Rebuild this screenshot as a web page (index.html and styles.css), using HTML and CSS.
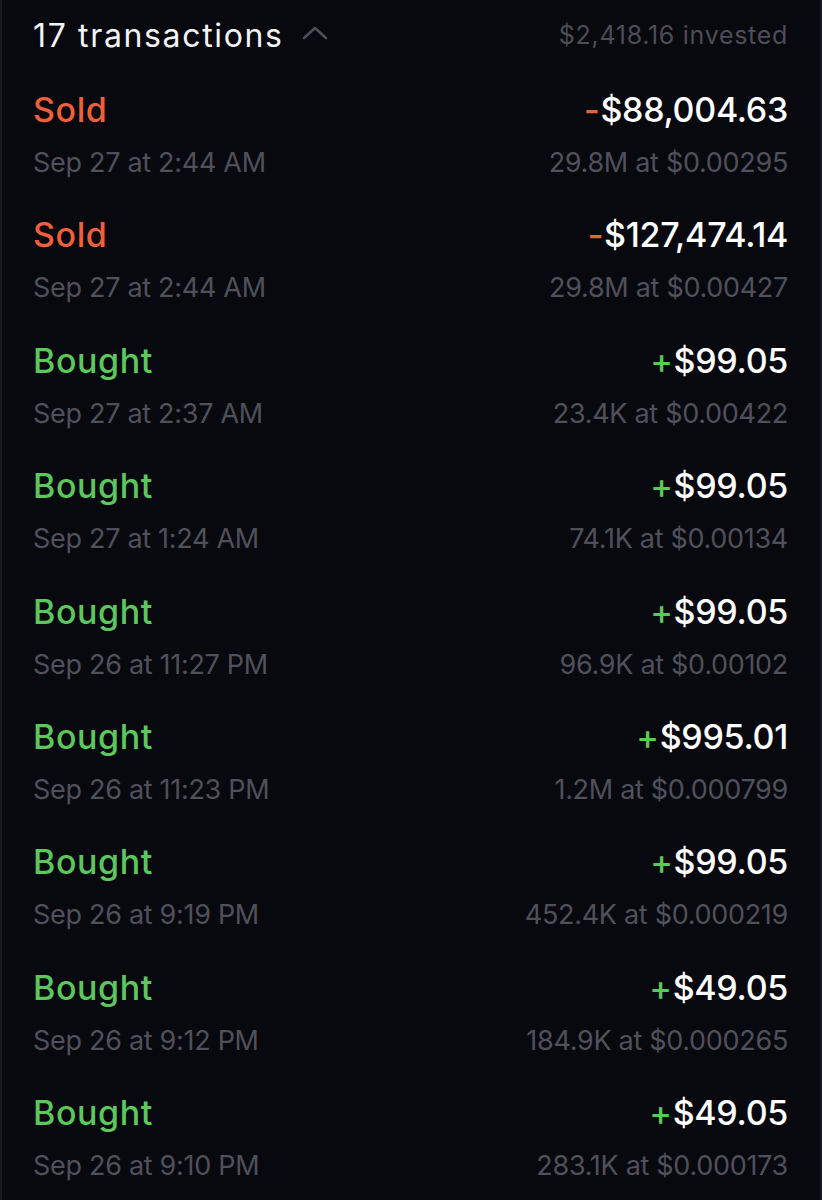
FILE: index.html
```html
<!DOCTYPE html>
<html lang="en">
<head>
    <meta charset="UTF-8">
    <meta name="viewport" content="width=device-width, initial-scale=1.0">
    <title>Transactions</title>
    <link rel="stylesheet" href="styles.css">
</head>
<body>
    <div class="panel">
        <div class="header">
            <div class="title">
                17 transactions
                <svg class="chevron" width="26" height="14" viewBox="0 0 26 14">
                    <path d="M2 12 L13 2 L24 12" fill="none" stroke="#4f4f59" stroke-width="2.6" stroke-linecap="round" stroke-linejoin="round"/>
                </svg>
            </div>
            <div class="invested">$2,418.16 invested</div>
        </div>

        <div class="tx">
            <div class="line">
                <span class="kind sold">Sold</span>
                <span class="amount"><span class="sign sold">-</span>$88,004.63</span>
            </div>
            <div class="line sub">
                <span>Sep 27 at 2:44 AM</span>
                <span>29.8M at $0.00295</span>
            </div>
        </div>

        <div class="tx">
            <div class="line">
                <span class="kind sold">Sold</span>
                <span class="amount"><span class="sign sold">-</span>$127,474.14</span>
            </div>
            <div class="line sub">
                <span>Sep 27 at 2:44 AM</span>
                <span>29.8M at $0.00427</span>
            </div>
        </div>

        <div class="tx">
            <div class="line">
                <span class="kind bought">Bought</span>
                <span class="amount"><span class="sign bought">+</span>$99.05</span>
            </div>
            <div class="line sub">
                <span>Sep 27 at 2:37 AM</span>
                <span>23.4K at $0.00422</span>
            </div>
        </div>

        <div class="tx">
            <div class="line">
                <span class="kind bought">Bought</span>
                <span class="amount"><span class="sign bought">+</span>$99.05</span>
            </div>
            <div class="line sub">
                <span>Sep 27 at 1:24 AM</span>
                <span>74.1K at $0.00134</span>
            </div>
        </div>

        <div class="tx">
            <div class="line">
                <span class="kind bought">Bought</span>
                <span class="amount"><span class="sign bought">+</span>$99.05</span>
            </div>
            <div class="line sub">
                <span>Sep 26 at 11:27 PM</span>
                <span>96.9K at $0.00102</span>
            </div>
        </div>

        <div class="tx">
            <div class="line">
                <span class="kind bought">Bought</span>
                <span class="amount"><span class="sign bought">+</span>$995.01</span>
            </div>
            <div class="line sub">
                <span>Sep 26 at 11:23 PM</span>
                <span>1.2M at $0.000799</span>
            </div>
        </div>

        <div class="tx">
            <div class="line">
                <span class="kind bought">Bought</span>
                <span class="amount"><span class="sign bought">+</span>$99.05</span>
            </div>
            <div class="line sub">
                <span>Sep 26 at 9:19 PM</span>
                <span>452.4K at $0.000219</span>
            </div>
        </div>

        <div class="tx">
            <div class="line">
                <span class="kind bought">Bought</span>
                <span class="amount"><span class="sign bought">+</span>$49.05</span>
            </div>
            <div class="line sub">
                <span>Sep 26 at 9:12 PM</span>
                <span>184.9K at $0.000265</span>
            </div>
        </div>

        <div class="tx">
            <div class="line">
                <span class="kind bought">Bought</span>
                <span class="amount"><span class="sign bought">+</span>$49.05</span>
            </div>
            <div class="line sub">
                <span>Sep 26 at 9:10 PM</span>
                <span>283.1K at $0.000173</span>
            </div>
        </div>
    </div>
</body>
</html>
```

FILE: styles.css
```css
html, body {
    margin: 0;
    padding: 0;
    background-color: #08080f;
}
body {
    font-family: Inter, "Noto Sans", sans-serif;
    color: #ffffff;
}
.panel {
    height: 1200px;
    box-sizing: border-box;
    border-left: 2px solid #181822;
    border-right: 2px solid #181822;
    padding: 13px 32px 0 31px;
    overflow: hidden;
}
.header {
    display: flex;
    justify-content: space-between;
    align-items: center;
    height: 44px;
    margin-bottom: 33px;
}
.title {
    display: flex;
    align-items: center;
    font-size: 32px;
    letter-spacing: 1.65px;
    color: #f4f4f6;
}
.chevron {
    margin-left: 18px;
    margin-top: -4px;
}
.invested {
    font-size: 25px;
    color: #4d4d57;
    letter-spacing: 0.7px;
}
.tx {
    height: 125.4px;
}
.line {
    display: flex;
    justify-content: space-between;
    align-items: baseline;
    line-height: 40px;
}
.kind {
    font-size: 34px;
    font-weight: 500;
    letter-spacing: 0.6px;
}
.sold {
    color: #ee5f3a;
}
.bought {
    color: #5cc75c;
}
.amount {
    font-size: 34px;
    font-weight: 500;
    letter-spacing: -0.3px;
    color: #ffffff;
}
.sign {
    margin-right: 1px;
}
.sub {
    margin-top: 17px;
    line-height: 32px;
    font-size: 27px;
    letter-spacing: -0.3px;
    color: #50505a;
}
```
